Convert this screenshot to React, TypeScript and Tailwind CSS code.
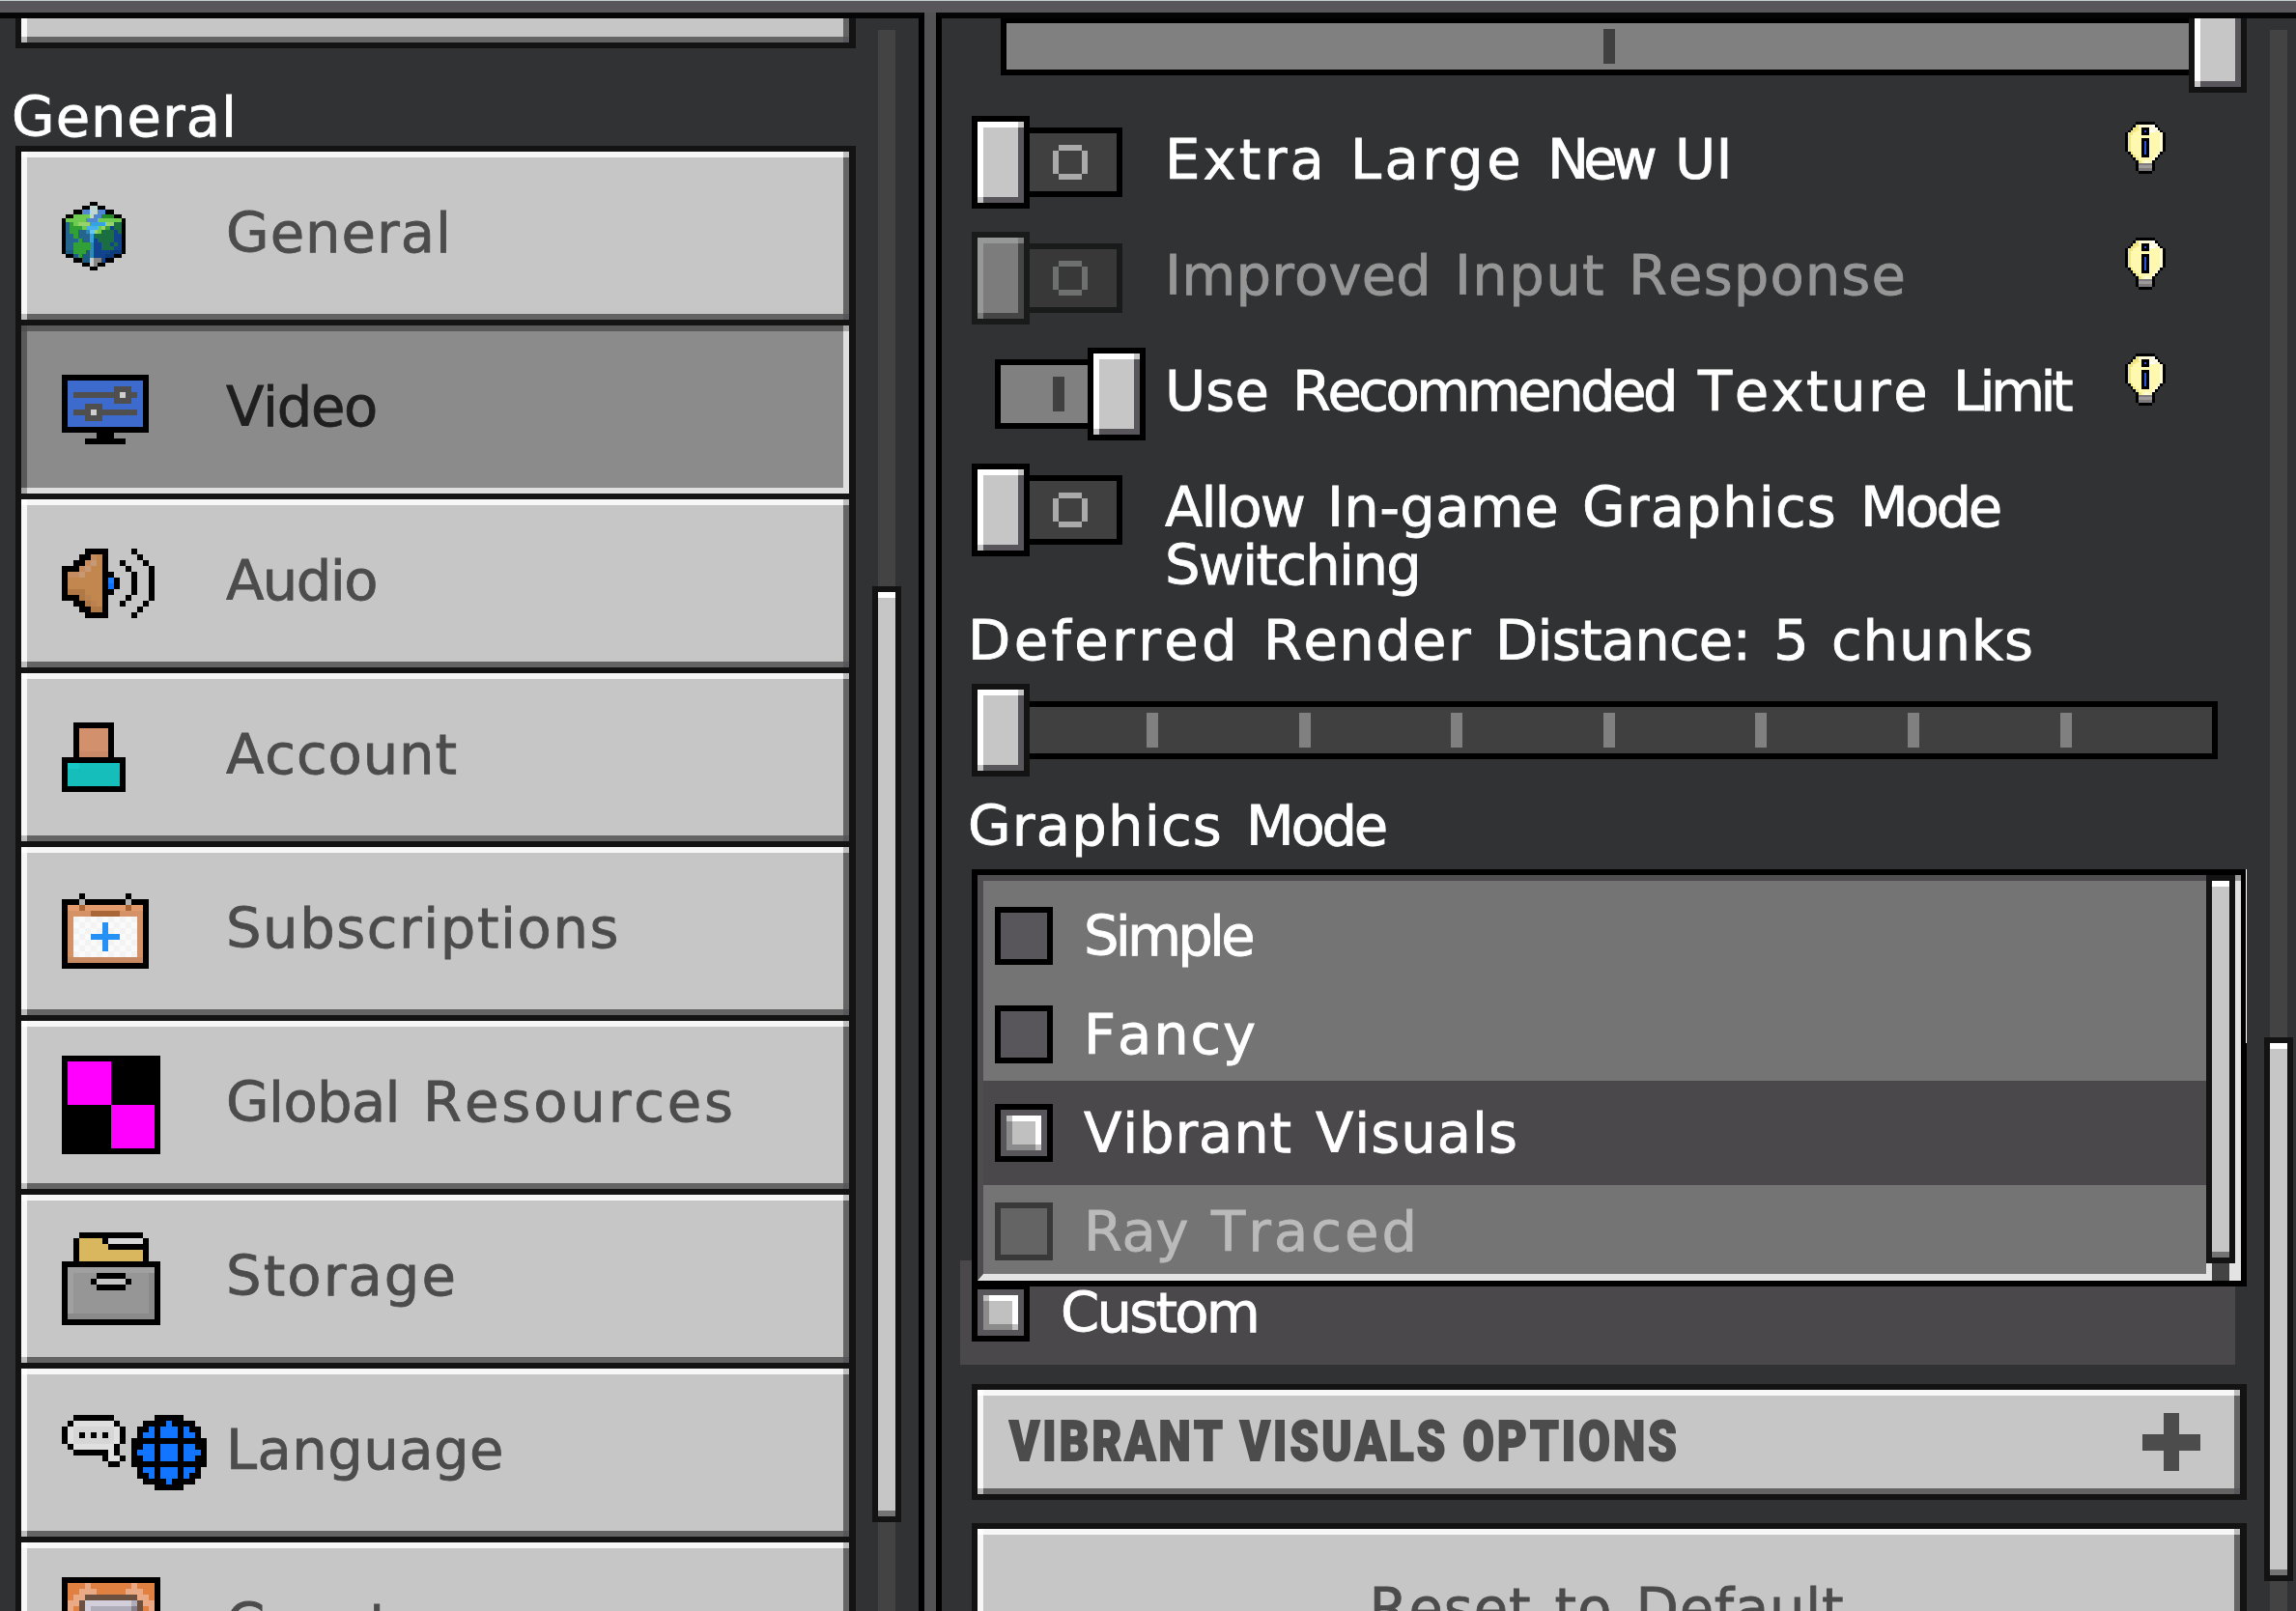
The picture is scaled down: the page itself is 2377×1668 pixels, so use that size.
import React from "react";

/* ---------- text ---------- */

const UNIT = 6;
const NARROW: Record<string, number> = { i: 2, l: 3, t: 4, I: 4, f: 5, k: 5, ":": 2, " ": 4 };

let ctx: CanvasRenderingContext2D | null = null;
function naturalWidth(text: string, font: string) {
  if (!ctx) ctx = document.createElement("canvas").getContext("2d");
  if (!ctx) return 0;
  ctx.font = font;
  ctx.fontKerning = "none";
  return ctx.measureText(text).width;
}

/* Each word is tracked so that it takes the advance width of the game's 6px-grid typeface. */
function Label({ text, className = "" }: { text: string; className?: string }) {
  return (
    <span
      className={
        "block h-[60px] -indent-[4px] whitespace-pre font-['DejaVu_Sans',sans-serif] text-[57.6px] leading-[60px] [font-kerning:none] [-webkit-text-stroke:0.8px_currentColor] " +
        className
      }
    >
      {text.split(/( )/).map((word, i) => {
        const target = [...word].reduce((sum, c) => sum + (NARROW[c] ?? 6), 0) * UNIT;
        const spacing = (target - naturalWidth(word, "57.6px 'DejaVu Sans'")) / Math.max(word.length, 1);
        return (
          <span key={i} style={{ letterSpacing: spacing + "px" }}>
            {word}
          </span>
        );
      })}
    </span>
  );
}

/* ---------- pixel art ---------- */

function Pixels({
  rows,
  palette,
  w,
  h,
}: {
  rows: string[];
  palette: Record<string, string>;
  w: number;
  h: number;
}) {
  const rects: React.ReactElement[] = [];
  rows.forEach((row, y) => {
    let x = 0;
    while (x < row.length) {
      let end = x + 1;
      while (end < row.length && row[end] === row[x]) end++;
      if (row[x] !== ".")
        rects.push(<rect key={x + "-" + y} x={x} y={y} width={end - x} height={1} fill={palette[row[x]]} />);
      x = end;
    }
  });
  return (
    <svg
      width={w}
      height={h}
      viewBox={"0 0 " + rows[0].length + " " + rows.length}
      preserveAspectRatio="none"
      shapeRendering="crispEdges"
      className="block shrink-0"
    >
      {rects}
    </svg>
  );
}

const EARTH = [
  ".......kk.......",
  ".....kkppkk.....",
  "...kkBBppBBkk...",
  ".kkLLLLpBBGGGkk.",
  "kLLLLLBBBLLLLLLk",
  "kTgLPPPCCCCPPDDk",
  "kTgggLcccLPgNDDk",
  "kTggTTMsPLDDDNDk",
  "kTTgTTTCDDDDDNNk",
  "kTTTgTTCNDDDDNNk",
  "kTTggggMNNDDNDNk",
  "kTTggggMNNDDDNNk",
  "kttgggtMNNNNnnnk",
  ".kktgttMNNNnnkk.",
  "...kkttwxxNkk...",
  ".....kkwxkk.....",
  ".......kk.......",
];
const EARTH_COLORS = {
  k: "#000", p: "#bfd6d3", B: "#4f87d3", L: "#6fcb50", G: "#248c27", T: "#23658f", g: "#31a036",
  P: "#98d26c", C: "#35a3e0", D: "#1b6e41", c: "#45b1ee", N: "#11448c", M: "#2e88b8", s: "#5fc9fa",
  t: "#1d5a80", n: "#0d3a78", w: "#c8c8c8", x: "#858585",
};

const MONITOR = [
  "kkkkkkkkkkkkkkk",
  "kbbbbbbbbbbbbbk",
  "kbbbbbbbbgggbbk",
  "kbggggggggwggbk",
  "kbbbbbbbbgggbbk",
  "kbbbgggbbbbbbbk",
  "kbgggwgggggggbk",
  "kbbbgggbbbbbbbk",
  "kbbbbbbbbbbbbbk",
  "kkkkkkkkkkkkkkk",
  "......kkk......",
  "....kkkkkkk....",
];

const SPEAKER = [
  "....kkkk....k...",
  "...kklok.....k..",
  "..kklLok..k...k.",
  "kkklLook...k...k",
  "kllLoookk...k..k",
  "kooooookbk..k..k",
  "kooooookBk..k..k",
  "kdddoookk...k..k",
  "kkkdeook...k...k",
  "..kkdeok..k...k.",
  "...kkddk.....k..",
  "....kkkk....k...",
];

const PERSON = [
  "..kkkkkkk..",
  "..ksssssk..",
  "..ksssssk..",
  "..ksssssk..",
  "..ksssssk..",
  "..kdddddk..",
  "kkkkkkkkkkk",
  "kuuvvvvvvvk",
  "ktttttttttk",
  "ktttttttttk",
  "ktttttttttk",
  "kkkkkkkkkkk",
];

const CALENDAR = [
  "...k.......k...",
  "kkkgkkkkkkkgkkk",
  "koobooooooobook",
  "kppppbbbbbppppk",
  "kpvwvwvwvwvwvpk",
  "kpwvwvwcwvwvwpk",
  "kpvwvwvcvwvwvpk",
  "kpwvwcccccwvwpk",
  "kpvwvwvcvwvwvpk",
  "kpwvwvwcwvwvwpk",
  "kpvwvwvwvwvwvpk",
  "kqqqqqqqqqqqqqk",
  "kkkkkkkkkkkkkkk",
];

const DRAWER = [
  "...kkkkkkkkkkk...",
  "..kyyyykwwwwwwk..",
  "..kyyyyykkkkkkk..",
  "..kyyyyyyyyyyyk..",
  "..kyyyyyyyyyyyk..",
  "kkkkkkkkkkkkkkkkk",
  "kaaaaaaaaaaaaaaak",
  "kammmmkkkkkmmmmdk",
  "kammmkccccckmmmdk",
  "kammmmkkkkkmmmmdk",
  "kammmmmmmmmmmmmdk",
  "kammmmmmmmmmmmmdk",
  "kammmmmmmmmmmmmdk",
  "kammmmmmmmmmmmmdk",
  "kdddddddddddddddk",
  "kkkkkkkkkkkkkkkkk",
];

const SPEECH_GLOBE = [
  "..kkkkkkk.......kkkkk....",
  ".kwwwwwwwk....kkkkbkkkk..",
  "kwvvvvvvvwk..kkbkbbbkbkk.",
  "kwvkvkvkvwk..kbbkbbbkbbk.",
  "kwvvvvvvvwk.kkkkkkkkkkkkk",
  ".kwwwwwwwk..kkbbkbbbkbbkk",
  "..kkkkkkwk..kbbbkbbbkbbbk",
  ".......kwwk.kkbbkbbbkbbkk",
  "........kk..kkkkkkkkkkkkk",
  ".............kbbkbbbkbbk.",
  ".............kkbkbbbkbkk.",
  "..............kkkkbkkkk..",
  "................kkkkk....",
];

const CREATOR = [
  "kkkkkkkkkkkkkkkkk",
  "koooloooooooloook",
  "koollloooooolllok".replace("oooooo", "ooooo") + "",
  "kollbbbbbbbbbllok",
  "kllbppppppppqbllk",
  "klobpqqqqqqqrbolk",
  "klobpqqqqqqqrbolk",
  "klobpqqqqqqqrbolk",
  "klobpqqqqqqqrbolk",
  "klobpqqqqqqqrbolk",
  "klobpqqqqqqqrbolk",
  "klobpqqqqqqqrbolk",
  "kllbqrrrrrrrrbllk",
  "kollbbbbbbbbbllok",
  "koollloooooolllok",
  "koooloooooooloook",
  "kkkkkkkkkkkkkkkkk",
];
CREATOR[2] = "koolllooooolllook";
CREATOR[14] = CREATOR[2];

const BULB = [
  "....kkkkkkk....",
  "...kdlllllwk...",
  "..kddykkkllwk..",
  ".kddyykbkwwylk.",
  "kddyyykkkyyyylk",
  "kdyyyyyyyyyyylk",
  "kdyyyykkkyyyylk",
  "kdyyyykbkyyyylk",
  "kdyyyykbkyyyylk",
  "kdyyyykbkyyyylk",
  "kdyyyykbkyyyylk",
  ".kdyyykbkyyylk.",
  "..kdyykkkyylk..",
  "...kdyyyyylk...",
  "....kdyllyk....",
  "....kgggggk....",
  "....khhhhhk....",
  "....kgggggk....",
  ".....kkkkk.....",
];
const Bulb = () => (
  <Pixels
    rows={BULB}
    w={42}
    h={54}
    palette={{ k: "#000", d: "#efe583", y: "#fff9b0", l: "#fffbd6", w: "#ffffff", b: "#2a57d8", g: "#7d7b7b", h: "#9c9a9a" }}
  />
);

const MissingTexture = () => (
  <svg width="102" height="102" viewBox="0 0 102 102" shapeRendering="crispEdges" className="block">
    <rect width="102" height="102" fill="#000" />
    <rect x="6" y="6" width="45" height="45" fill="#ff00ff" />
    <rect x="51" y="51" width="45" height="45" fill="#ff00ff" />
  </svg>
);

/* ---------- sidebar ---------- */

const ITEMS: { label: string; icon: React.ReactElement; selected?: boolean }[] = [
  { label: "General", icon: <Pixels rows={EARTH} palette={EARTH_COLORS} w={66} h={71} /> },
  {
    label: "Video",
    selected: true,
    icon: <Pixels rows={MONITOR} palette={{ k: "#000", b: "#3c6bcd", g: "#4f4f4f", w: "#cfcfcf" }} w={90} h={72} />,
  },
  {
    label: "Audio",
    icon: (
      <Pixels
        rows={SPEAKER}
        palette={{ k: "#000", o: "#c2864f", l: "#c58d5f", L: "#c79873", d: "#af7845", e: "#b98250", b: "#1a80ff", B: "#0f70fa" }}
        w={96}
        h={72}
      />
    ),
  },
  {
    label: "Account",
    icon: (
      <Pixels rows={PERSON} palette={{ k: "#000", s: "#d2906c", d: "#ca8a68", u: "#16c8c6", v: "#15bfbd", t: "#15bdbb" }} w={66} h={72} />
    ),
  },
  {
    label: "Subscriptions",
    icon: (
      <Pixels
        rows={CALENDAR}
        palette={{ k: "#000", g: "#b2b2b2", o: "#e39b6e", b: "#a96637", p: "#d69267", q: "#c78a62", w: "#fafafa", v: "#f3f3f3", c: "#2790f5" }}
        w={90}
        h={78}
      />
    ),
  },
  { label: "Global Resources", icon: <MissingTexture /> },
  {
    label: "Storage",
    icon: (
      <Pixels
        rows={DRAWER}
        palette={{ k: "#000", y: "#d9b75f", w: "#d8d8d8", a: "#a0a0a0", m: "#969696", d: "#8a8a8a", c: "#c6c6c6" }}
        w={102}
        h={96}
      />
    ),
  },
  {
    label: "Language",
    icon: <Pixels rows={SPEECH_GLOBE} palette={{ k: "#000", w: "#e0e0e0", v: "#d6d6d6", b: "#1275ff" }} w={150} h={78} />,
  },
  {
    label: "Creator",
    icon: (
      <Pixels
        rows={CREATOR}
        palette={{ k: "#000", o: "#e08142", l: "#e9aa85", b: "#6d5140", p: "#d2cfdb", q: "#b0adba", r: "#83808c" }}
        w={102}
        h={102}
      />
    ),
  },
];

/* Raised face: light top and left edges, dark bottom and right edges, blended corners. */
function Raised({ className = "", children }: { className?: string; children?: React.ReactNode }) {
  return (
    <div className={"relative bg-[#c6c6c6] shadow-[inset_6px_6px_0_#f7f7f7,inset_-6px_-6px_0_#646464] " + className}>
      <span className="absolute top-0 left-0 size-1.5 bg-white" />
      <span className="absolute top-0 right-0 size-1.5 bg-[#bdbdbd]" />
      <span className="absolute bottom-0 left-0 size-1.5 bg-[#bdbdbd]" />
      <span className="absolute right-0 bottom-0 size-1.5 bg-[#58565a]" />
      {children}
    </div>
  );
}

function SidebarItem({ label, icon, selected }: { label: string; icon: React.ReactElement; selected?: boolean }) {
  const body = (
    <>
      <div className="w-[174px] shrink-0">{icon}</div>
      <Label text={label} className={"-mt-[5px] " + (selected ? "text-[#1f1f1f]" : "text-[#4c4c4c]")} />
    </>
  );
  if (selected)
    return (
      <div className="relative flex h-[174px] shrink-0 items-center bg-[#8b8b8b] pl-[42px] shadow-[inset_6px_6px_0_#5a5a5a,inset_-6px_-6px_0_#dfdfdf]">
        <span className="absolute top-0 left-0 size-1.5 bg-[#515151]" />
        <span className="absolute top-0 right-0 size-1.5 bg-[#a6a6a6]" />
        <span className="absolute bottom-0 left-0 size-1.5 bg-[#a6a6a6]" />
        {body}
      </div>
    );
  return <Raised className="flex h-[174px] shrink-0 items-center pl-[42px]">{body}</Raised>;
}

function ScrollThumb({ className = "" }: { className?: string }) {
  return (
    <div className={"w-[30px] shrink-0 border-6 border-[#131313] bg-[#c6c6c6] shadow-[inset_0_6px_0_#fff,inset_0_-6px_0_#737373] " + className} />
  );
}

/* ---------- controls ---------- */

function Knob({ className = "", disabled = false }: { className?: string; disabled?: boolean }) {
  const corner = disabled ? "bg-[#7c7c7c]" : "bg-[#c6c6c6]";
  return (
    <div
      className={
        "absolute h-24 w-[60px] border-6 " +
        (disabled
          ? "border-[#191a1a] bg-[#7c7c7c] shadow-[inset_6px_6px_0_#969898,inset_-6px_-6px_0_#464546] "
          : "bg-[#c6c6c6] shadow-[inset_6px_6px_0_#fff,inset_-6px_-6px_0_#58565a] ") +
        className
      }
    >
      <span className={"absolute top-0 right-0 size-1.5 " + corner} />
      <span className={"absolute bottom-0 left-0 size-1.5 " + corner} />
    </div>
  );
}

function Toggle({ on = false, disabled = false }: { on?: boolean; disabled?: boolean }) {
  const ring = disabled ? "bg-[#6e7070]" : "bg-[#aaaaaa]";
  return (
    <div className="relative h-24 w-[180px] shrink-0">
      {on ? (
        <div className="mt-3 ml-6 h-[72px] w-[108px] border-6 border-black bg-[#808080]">
          <div className="mt-3 ml-[54px] h-9 w-3 bg-[#404040]" />
        </div>
      ) : (
        <div
          className={
            "mt-3 ml-6 h-[72px] w-[132px] border-6 " +
            (disabled ? "border-[#191a1a] bg-[#383838]" : "border-black bg-[#404040]")
          }
        >
          <div className="mt-3 ml-[54px] grid h-9 w-9 grid-cols-[6px_24px_6px] grid-rows-[6px_24px_6px]">
            <span className={"col-start-2 " + ring} />
            <span className={"col-start-1 row-start-2 " + ring} />
            <span className={"col-start-3 row-start-2 " + ring} />
            <span className={"col-start-2 row-start-3 " + ring} />
          </div>
        </div>
      )}
      <Knob disabled={disabled} className={"top-0 " + (on ? "right-0" : "left-0") + (disabled ? "" : " border-black")} />
    </div>
  );
}

function ToggleRow({
  lines,
  on,
  disabled,
  bulb = true,
  className = "h-24",
}: {
  lines: string[];
  on?: boolean;
  disabled?: boolean;
  bulb?: boolean;
  className?: string;
}) {
  return (
    <div className={"flex shrink-0 items-start " + className}>
      <Toggle on={on} disabled={disabled} />
      <div className={"mt-4 ml-6 w-[990px] shrink-0 " + (disabled ? "text-[#969696]" : "text-white")}>
        {lines.map((line) => (
          <Label key={line} text={line} />
        ))}
      </div>
      {bulb && (
        <div className="mt-1.5">
          <Bulb />
        </div>
      )}
    </div>
  );
}

function Checkbox({ checked = false, disabled = false }: { checked?: boolean; disabled?: boolean }) {
  return (
    <div className={"size-[60px] shrink-0 border-6 p-1.5 " + (disabled ? "border-[#393939] bg-[#646464]" : "border-black bg-[#58565a]")}>
      {checked && (
        <div className="relative size-9 bg-[#c0c0c0] shadow-[inset_-6px_6px_0_#fff,inset_6px_-6px_0_#8b8b8b]">
          <span className="absolute top-0 left-0 size-1.5 bg-[#c0c0c0]" />
          <span className="absolute right-0 bottom-0 size-1.5 bg-[#c0c0c0]" />
        </div>
      )}
    </div>
  );
}

function Option({
  label,
  checked,
  disabled,
  className,
}: {
  label: string;
  checked?: boolean;
  disabled?: boolean;
  className: string;
}) {
  return (
    <div className={"flex shrink-0 items-start pl-3 " + className}>
      <Checkbox checked={checked} disabled={disabled} />
      <Label text={label} className={"mt-px ml-9 " + (disabled ? "text-[#bababa]" : "text-white")} />
    </div>
  );
}

function SectionTitle() {
  const words = "VIBRANT VISUALS OPTIONS";
  const target = 694 / 0.82;
  const spacing = (target - naturalWidth(words, "900 57.6px Roboto")) / words.length;
  return (
    <span
      className="block origin-left scale-x-[0.82] font-['Roboto',sans-serif] text-[57.6px] leading-[60px] font-black whitespace-pre text-[#4c4c4c] [font-kerning:none] [-webkit-text-stroke:2px_currentColor]"
      style={{ letterSpacing: spacing + "px" }}
    >
      {words}
    </span>
  );
}

export default function App() {
  return (
    <div className="flex h-[1668px] w-[2377px] flex-col overflow-hidden bg-[#313233]">
      <div className="h-px shrink-0 bg-[#c3cfd0]" />
      <div className="h-3 shrink-0 bg-[#58565a]" />
      <div className="flex h-[1655px] shrink-0">
        <aside className="flex w-[957px] shrink-0 overflow-hidden border-t-6 border-r-6 border-t-[#050505] border-r-black">
          <div className="ml-4 flex w-[870px] shrink-0 flex-col">
            <div className="-mt-[155px] shrink-0 border-6 border-r-7 border-[#131313]">
              <Raised className="h-[174px]" />
            </div>
            <Label text="General" className="mt-[42px] mb-[-1px] shrink-0 text-white" />
            <div className="flex shrink-0 flex-col gap-1.5 bg-[#131313] py-1.5 pr-[7px] pl-1.5">
              {ITEMS.map((item) => (
                <SidebarItem key={item.label} {...item} />
              ))}
            </div>
          </div>
          <div className="mt-3 ml-[17px] flex w-[30px] shrink-0 flex-col items-center">
            <div className="h-[576px] w-[18px] shrink-0 bg-[#434343]" />
            <ScrollThumb className="h-[969px]" />
            <div className="w-[18px] grow bg-[#434343]" />
          </div>
        </aside>
        <div className="w-3 shrink-0 bg-[#535254]" />
        <main className="flex w-[1408px] shrink-0 overflow-hidden border-t-6 border-l-6 border-t-[#050505] border-l-black">
          <div className="ml-[31px] flex w-[1320px] shrink-0 flex-col">
            <div className="relative -mt-[19px] h-24 shrink-0 pt-[18px] pl-[30px]">
              <div className="h-[60px] w-[1260px] border-6 border-black bg-[#808080] pt-1.5 pl-[618px]">
                <div className="h-9 w-3 bg-[#404040]" />
              </div>
              <Knob className="top-0 right-0 border-[#131313]" />
            </div>
            <div className="mt-6 flex shrink-0 flex-col gap-6">
              <ToggleRow lines={["Extra Large New UI"]} />
              <ToggleRow lines={["Improved Input Response"]} disabled />
              <ToggleRow lines={["Use Recommended Texture Limit"]} on />
              <ToggleRow lines={["Allow In-game Graphics Mode", "Switching"]} bulb={false} className="h-[154px]" />
            </div>
            <Label text="Deferred Render Distance: 5 chunks" className="shrink-0 text-white" />
            <div className="relative mt-3.5 h-24 shrink-0 pt-[18px] pl-[30px]">
              <div className="flex h-[60px] w-[1260px] gap-[145.6px] border-6 border-black bg-[#404040] pt-1.5 pl-[145px]">
                {[1, 2, 3, 4, 5, 6, 7].map((n) => (
                  <div key={n} className="h-9 w-3 shrink-0 bg-[#808080]" />
                ))}
              </div>
              <Knob className="top-0 left-0 border-[#131313]" />
            </div>
            <Label text="Graphics Mode" className="mt-[22px] shrink-0 text-white" />

            <div className="relative z-10 mt-3.5 flex h-[432px] shrink-0 border-6 border-black bg-[#747474]">
              <span className="absolute -top-1.5 -right-1.5 h-[180px] w-px bg-white" />
              <div className="flex w-[1272px] shrink-0 flex-col border-t-6 border-b-7 border-l-6 border-t-[#4e4c4e] border-b-[#e3e3e3] border-l-[#4e4c4e]">
                <Option label="Simple" className="h-[102px] pt-[27px]" />
                <Option label="Fancy" className="h-[105px] pt-[27px]" />
                <Option label="Vibrant Visuals" checked className="h-[108px] bg-[#4a484a] pt-6" />
                <Option label="Ray Traced" disabled className="grow pt-[18px]" />
              </div>
              <div className="flex w-[30px] shrink-0 flex-col items-center bg-[#e3e3e3]">
                <ScrollThumb className="h-[402px]" />
                <div className="w-[18px] grow bg-[#434343]" />
              </div>
              <div className="w-1.5 border-t-6 border-[#999] bg-[#e3e3e3]" />
            </div>

            <div className="-mt-[27px] -ml-3 flex h-[108px] w-[1320px] shrink-0 items-start bg-[#4a484a] pt-6 pl-3">
              <Checkbox checked />
              <Label text="Custom" className="mt-px ml-9 text-white" />
            </div>

            <div className="mt-5 h-[120px] shrink-0 border-6 border-r-7 border-[#131313]">
              <Raised className="flex h-full items-center justify-between pr-[41px] pl-[33px]">
                <SectionTitle />
                <svg width="60" height="60" viewBox="0 0 60 60" shapeRendering="crispEdges" fill="#4c4c4c">
                  <rect x="22" width="16" height="60" />
                  <rect y="22" width="60" height="17" />
                </svg>
              </Raised>
            </div>

            <div className="mt-6 h-[186px] shrink-0 border-6 border-r-7 border-[#131313]">
              <Raised className="flex h-full justify-center pt-[53px]">
                <Label text="Reset to Default" className="text-[#4c4c4c]" />
              </Raised>
            </div>
          </div>
          <div className="mt-3 ml-[18px] flex w-[30px] shrink-0 flex-col items-center">
            <div className="h-[1043px] w-[18px] shrink-0 bg-[#434343]" />
            <ScrollThumb className="h-[563px]" />
            <div className="w-[18px] grow bg-[#434343]" />
          </div>
        </main>
      </div>
    </div>
  );
}
